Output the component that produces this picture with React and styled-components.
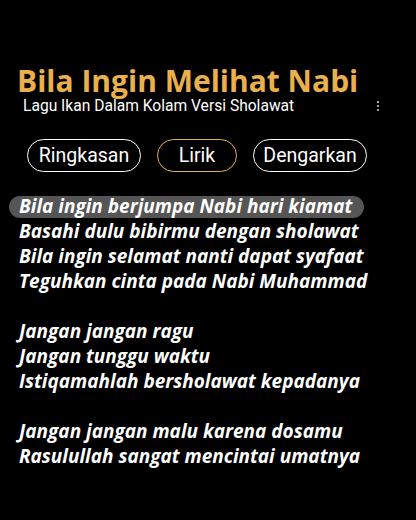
import React from "react";
import styled, { createGlobalStyle } from "styled-components";

const Global = createGlobalStyle`
  html, body { margin: 0; padding: 0; background: #000; }
  body { width: 416px; height: 520px; overflow: hidden; }
`;

const Page = styled.div`
  width: 416px;
  height: 520px;
  background: #000;
  display: flex;
  flex-direction: column;
  padding-top: 66px;
  box-sizing: border-box;
`;

const Header = styled.header`
  display: flex;
  flex-direction: column;
  padding-left: 17px;
  padding-right: 36px;
`;

const Title = styled.h1`
  margin: 0;
  font-family: "Open Sans", sans-serif;
  font-weight: 700;
  font-size: 30px;
  line-height: 30px;
  color: #eab04b;
  white-space: nowrap;
`;

const SubRow = styled.div`
  display: flex;
  align-items: center;
  justify-content: space-between;
  padding-left: 6px;
  margin-top: 1px;
`;

const Subtitle = styled.div`
  font-family: Roboto, sans-serif;
  font-size: 15.6px;
  line-height: 18px;
  color: #fff;
`;

const Dots = styled.div`
  display: flex;
  flex-direction: column;
  gap: 2px;
  margin-right: 1px;
  span {
    width: 2px;
    height: 2px;
    border-radius: 50%;
    background: #ddd;
  }
`;

const Tabs = styled.nav`
  display: flex;
  gap: 16px;
  padding-left: 27px;
  margin-top: 24px;
`;

const Tab = styled.button`
  background: transparent;
  border: 1.5px solid ${(p) => (p.$active ? "#e6b25c" : "#fff")};
  border-radius: 17px;
  height: 33px;
  padding: 0;
  color: #fff;
  font-family: Roboto, sans-serif;
  font-size: 19.5px;
  line-height: 1;
  box-sizing: border-box;
  display: flex;
  align-items: center;
  justify-content: center;
  width: ${(p) => p.$w}px;
`;

const Lyrics = styled.div`
  display: flex;
  flex-direction: column;
  align-items: flex-start;
  margin-top: 22px;
  padding-left: 9px;
`;

const Line = styled.div`
  font-family: "Open Sans", sans-serif;
  font-weight: 700;
  font-style: italic;
  font-size: 19px;
  line-height: 25px;
  height: 25px;
  color: #fff;
  padding: 0 10px;
  white-space: nowrap;
  display: flex;
  align-items: center;
`;

const Active = styled.span`
  background: #555;
  border-radius: 11px;
  height: 22px;
  display: flex;
  align-items: center;
  padding: 0 12px 0 10px;
  margin: 0 -12px 0 -10px;
`;

const lines = [
  "Bila ingin berjumpa Nabi hari kiamat",
  "Basahi dulu bibirmu dengan sholawat",
  "Bila ingin selamat nanti dapat syafaat",
  "Teguhkan cinta pada Nabi Muhammad",
  "",
  "Jangan jangan ragu",
  "Jangan tunggu waktu",
  "Istiqamahlah bersholawat kepadanya",
  "",
  "Jangan jangan malu karena dosamu",
  "Rasulullah sangat mencintai umatnya",
];

export default function App() {
  return (
    <>
      <Global />
      <Page>
        <Header>
          <Title>Bila Ingin Melihat Nabi</Title>
          <SubRow>
            <Subtitle>Lagu Ikan Dalam Kolam Versi Sholawat</Subtitle>
            <Dots>
              <span />
              <span />
              <span />
            </Dots>
          </SubRow>
        </Header>
        <Tabs>
          <Tab $w={114}>Ringkasan</Tab>
          <Tab $w={80} $active>Lirik</Tab>
          <Tab $w={114}>Dengarkan</Tab>
        </Tabs>
        <Lyrics>
          {lines.map((l, i) => (
            <Line key={i}>{i === 0 ? <Active>{l}</Active> : l}</Line>
          ))}
        </Lyrics>
      </Page>
    </>
  );
}
